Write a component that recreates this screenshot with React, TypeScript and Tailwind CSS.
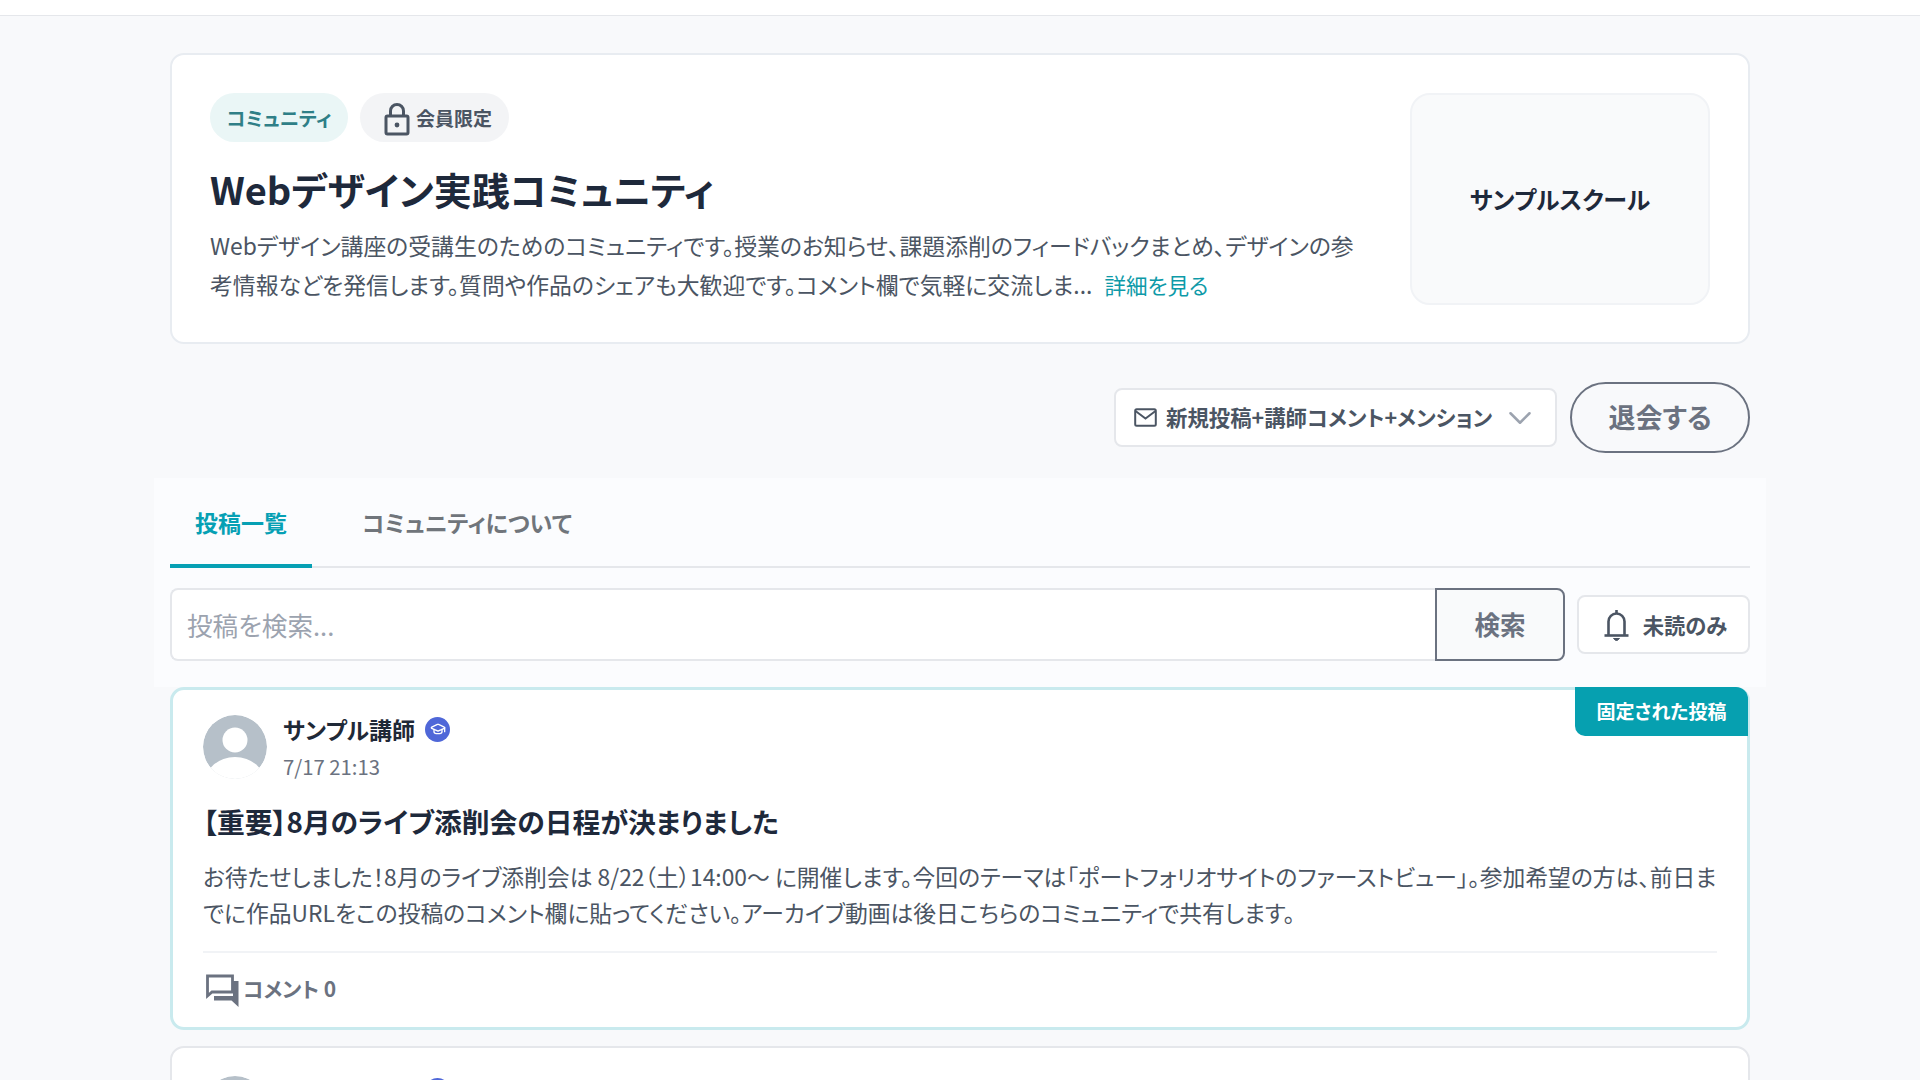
import React from "react";
import { ChevronDown, GraduationCap } from "lucide-react";

const font = { jp: "[font-family:'Noto_Sans_CJK_JP','Noto_Sans',sans-serif] [font-feature-settings:'palt']" };

function LockIcon() {
  return (
    <svg width="26" height="33" viewBox="0 0 26 33" fill="none" stroke="#4b5563" strokeWidth="3" className="mt-[3px] shrink-0">
      <path d="M6.5 13V8a6.5 6.5 0 0 1 13 0v5" />
      <rect x="2" y="13" width="22" height="18" rx="1.5" />
      <circle cx="13" cy="22" r="2.4" fill="#4b5563" stroke="none" />
    </svg>
  );
}

function MailIcon() {
  return (
    <svg width="23" height="19" viewBox="0 0 23 19" fill="none" stroke="#4b5563" strokeWidth="2" className="shrink-0">
      <rect x="1.2" y="1.2" width="20.6" height="16.6" rx="1.5" />
      <path d="M1.5 3l10 7.5 10-7.5" />
    </svg>
  );
}

function BellIcon() {
  return (
    <svg width="25" height="32" viewBox="0 0 25 32" fill="none" stroke="#4b5563" strokeWidth="2.6" className="shrink-0">
      <path d="M12.5 1v3" />
      <path d="M4.5 26V12.5a8 8 0 0 1 16 0V26" />
      <path d="M0.5 26.5h24" />
      <path d="M9.5 29.5h6l-3 2.5z" fill="#4b5563" strokeWidth="1" />
    </svg>
  );
}

function CommentIcon() {
  return (
    <svg width="33" height="33" viewBox="0 0 33 33" fill="none" className="mt-[3px] shrink-0">
      <path d="M1.5 22V2h25v16H6z" stroke="#6b7280" strokeWidth="2.8" />
      <path d="M8 22h19V7h5.500v26l-7-6.500H8z" fill="#6b7280" />
    </svg>
  );
}

function Avatar() {
  return (
    <svg width="64" height="64" viewBox="0 0 64 64" className="shrink-0 rounded-full">
      <circle cx="32" cy="32" r="32" fill="#b6c0c9" />
      <circle cx="32" cy="25" r="12.5" fill="#ffffff" />
      <ellipse cx="32" cy="68" rx="30" ry="26" fill="#ffffff" />
    </svg>
  );
}

function TeacherHead({ date }: { date?: string }) {
  return (
    <div className="flex items-start gap-[16px]">
      <Avatar />
      <div className="flex flex-col">
        <div className="flex h-[28px] items-center gap-[10px]">
          <span className="text-[23px] font-bold text-[#1f2937]">サンプル講師</span>
          <span className="flex h-[25px] w-[25px] items-center justify-center rounded-full bg-[#4f67d8]">
            <GraduationCap size={16} color="#ffffff" strokeWidth={2} />
          </span>
        </div>
        {date && <span className="mt-[8px] text-[20.3px] leading-[30px] text-[#6b7280]">{date}</span>}
      </div>
    </div>
  );
}

export default function App() {
  return (
    <div className={`h-[1080px] overflow-hidden bg-[#f8f9fb] ${font.jp}`}>
      <div className="h-[16px] border-b border-[#e5e7eb] bg-white" />

      <div className="mx-auto w-[1580px] pt-[37px]">
        <section className="flex h-[291px] justify-between rounded-[14px] border-2 border-[#e8ecf1] bg-white pt-[38px] pr-[38px] pl-[38px]">
          <div className="w-[1150px]">
            <div className="flex gap-[12px]">
              <span className="flex h-[49px] w-[138px] items-center justify-center rounded-full bg-[#eaf6f6] text-[19.5px] font-bold text-[#2f7f87]">
                コミュニティ
              </span>
              <span className="flex h-[49px] w-[149px] items-center justify-center gap-[6px] rounded-full bg-[#f3f4f6] pt-[1px] pl-[7px] text-[19px] font-bold text-[#4b5563]">
                <LockIcon />
                会員限定
              </span>
            </div>
            <h1 className="mt-[18px] text-[38px] leading-[58px] font-bold text-[#1e293b]">Webデザイン実践コミュニティ</h1>
            <p className="mt-[8px] text-[22.85px] leading-[39px] text-[#4b5563]">
              Webデザイン講座の受講生のためのコミュニティです。授業のお知らせ、課題添削のフィードバックまとめ、デザインの参考情報などを発信します。質問や作品のシェアも大歓迎です。コメント欄で気軽に交流しま...
              <a className="ml-[12px] text-[21.6px] text-[#0e9aa8]">詳細を見る</a>
            </p>
          </div>
          <div className="flex h-[212px] w-[300px] items-center justify-center rounded-[20px] border-2 border-[#f1f3f6] bg-[#f9fafb] text-[24px] font-bold text-[#1e293b]">
            サンプルスクール
          </div>
        </section>

        <div className="mt-[38px] flex items-center justify-end gap-[13px]">
          <div className="flex h-[59px] w-[443px] items-center gap-[9px] rounded-[8px] border-2 border-[#e5e7eb] bg-white pl-[18px]">
            <MailIcon />
            <span className="text-[21.4px] font-bold text-[#4b5563]">新規投稿+講師コメント+メンション</span>
            <ChevronDown size={38} color="#9ca3af" strokeWidth={1.6} />
          </div>
          <button className="h-[71px] w-[180px] rounded-full border-2 border-[#6b7280] text-[27px] font-bold text-[#6b7280]">退会する</button>
        </div>

        <div className="-mx-[16px] mt-[25px] h-[209px] bg-[#fbfcfe] px-[16px]">
          <div className="flex h-[90px] items-end border-b-2 border-[#e5e7eb]">
            <div className="-mb-[2px] flex h-[90px] w-[142px] items-center justify-center border-b-4 border-[#06a0b4] pt-[3px] text-[23px] font-bold text-[#06a0b4]">
              投稿一覧
            </div>
            <div className="ml-[50px] flex h-[90px] items-center pt-[3px] text-[23px] font-bold text-[#70757b]">コミュニティについて</div>
          </div>
          <div className="mt-[20px] flex items-center gap-[12px]">
            <div className="flex flex-1">
              <input
                placeholder="投稿を検索..."
                className="h-[73px] flex-1 rounded-l-[8px] border-2 border-r-0 border-[#e5e7eb] bg-white px-[15px] text-[25.6px] outline-none placeholder:text-[#9ca3af]"
              />
              <button className="h-[73px] w-[130px] rounded-r-[8px] border-2 border-[#6b7280] bg-[#f9fafb] text-[25.6px] font-bold text-[#6b7280]">検索</button>
            </div>
            <button className="flex h-[59px] w-[173px] items-center justify-center gap-[14px] rounded-[8px] border-2 border-[#e5e7eb] bg-white pl-[4px] text-[21.3px] font-bold text-[#4b5563]">
              <BellIcon />
              未読のみ
            </button>
          </div>
        </div>

        <article className="relative h-[343px] rounded-[14px] border-[3px] border-[#c9eaee] bg-white pt-[25px] pr-[30px] pl-[30px]">
          <span className="absolute -top-[3px] -right-[1px] flex h-[49px] w-[173px] items-center justify-center rounded-tr-[12px] rounded-bl-[10px] bg-[#06a0b0] text-[19px] font-bold text-white">
            固定された投稿
          </span>
          <TeacherHead date="7/17 21:13" />
          <h2 className="mt-[18px] text-[27.8px] leading-[44px] font-bold text-[#1e293b]">【重要】8月のライブ添削会の日程が決まりました</h2>
          <p className="mt-[16px] text-[22.8px] leading-[36px] text-[#4b5563]">
            お待たせしました！8月のライブ添削会は 8/22（土）14:00〜 に開催します。今回のテーマは「ポートフォリオサイトのファーストビュー」。参加希望の方は、前日までに作品URLをこの投稿のコメント欄に貼ってください。アーカイブ動画は後日こちらのコミュニティで共有します。
          </p>
          <div className="mt-[20px] flex h-[74px] items-center gap-[4px] border-t-2 border-[#f1f3f6] pl-[3px] text-[21px] font-bold text-[#6b7280]">
            <CommentIcon />
            コメント 0
          </div>
        </article>

        <article className="mt-[16px] h-[300px] rounded-[14px] border-2 border-[#e5e7eb] bg-white pt-[28px] pr-[31px] pl-[31px]">
          <TeacherHead />
        </article>
      </div>
    </div>
  );
}
